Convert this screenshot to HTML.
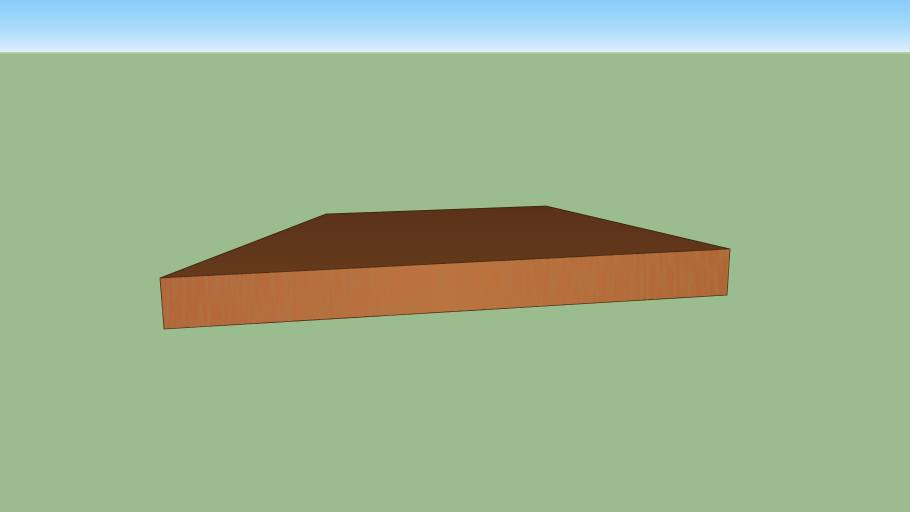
<!DOCTYPE html>
<html><head><meta charset="utf-8"><style>
html,body{margin:0;padding:0;width:910px;height:512px;overflow:hidden;background:#9abc8e}
</style></head><body>
<svg width="910" height="512" viewBox="0 0 910 512" xmlns="http://www.w3.org/2000/svg">
<defs>
<linearGradient id="sky" x1="0" y1="0" x2="0" y2="1">
<stop offset="0" stop-color="#88cdf9"/><stop offset="0.5" stop-color="#a6d9fa"/><stop offset="1" stop-color="#dbeffd"/>
</linearGradient>
<linearGradient id="top" x1="0" y1="0" x2="0" y2="1">
<stop offset="0" stop-color="#5a3218"/><stop offset="1" stop-color="#653a1c"/>
</linearGradient>
<linearGradient id="front" x1="0" y1="0" x2="1" y2="0">
<stop offset="0" stop-color="#b2663a"/><stop offset="0.5" stop-color="#bd733e"/><stop offset="1" stop-color="#b06535"/>
</linearGradient>
<filter id="grain" x="0" y="0" width="100%" height="100%">
<feTurbulence type="fractalNoise" baseFrequency="0.3 0.03" numOctaves="3" seed="3"/>
<feColorMatrix values="0 0 0 0 0.4  0 0 0 0 0.2  0 0 0 0 0.07  0 0 0 1.2 -0.45"/>
<feComposite in2="SourceGraphic" operator="in"/>
</filter>
</defs>
<rect x="0" y="0" width="910" height="52" fill="url(#sky)"/>
<rect x="0" y="52" width="910" height="1.5" fill="#b4cfa8"/>
<polygon points="160,278 326,214 546,206 730,249" fill="url(#top)" stroke="#3a220f" stroke-width="0.8"/>
<polygon points="160,278 730,249 727,295 164,329" fill="url(#front)" stroke="#4a2a12" stroke-width="0.8"/>
<polygon points="160,278 730,249 727,295 164,329" fill="#000" filter="url(#grain)"/>
</svg>
</body></html>
